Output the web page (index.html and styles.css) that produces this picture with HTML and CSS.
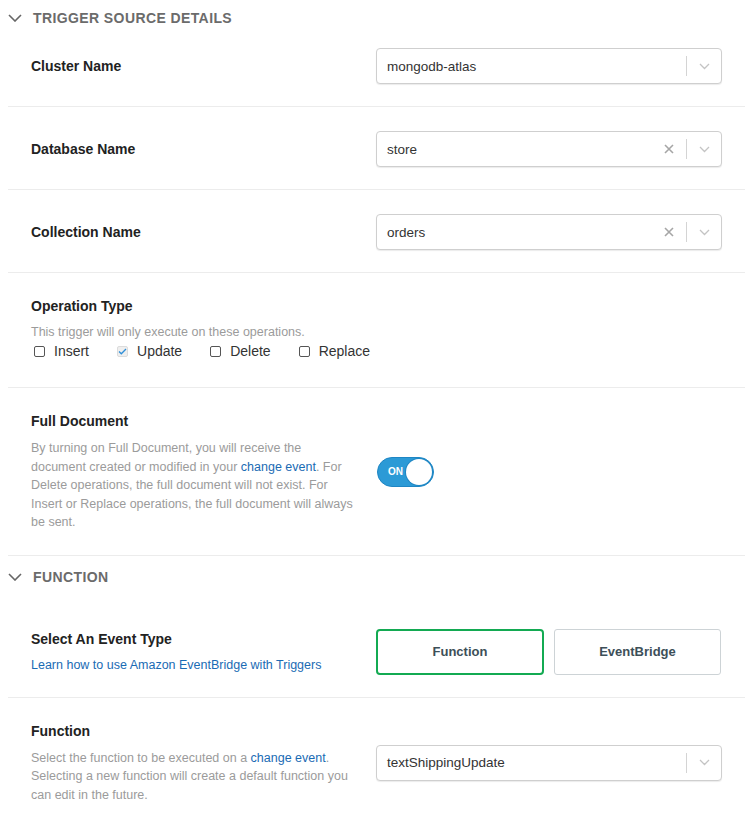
FILE: index.html
```html
<!DOCTYPE html>
<html>
<head>
<meta charset="utf-8">
<link rel="stylesheet" href="styles.css">
</head>
<body>
<div class="panel">
  <div class="section-header">
    <svg class="section-chevron" width="14" height="8" viewBox="0 0 14 8"><path d="M1 1l6 6 6-6" fill="none" stroke="#666" stroke-width="1.6"/></svg>
    <span>TRIGGER SOURCE DETAILS</span>
  </div>

  <div class="row row--first">
    <div class="label-col"><div class="label">Cluster Name</div></div>
    <div class="control-col">
      <div class="select">
        <span class="select-value">mongodb-atlas</span>
        <span class="select-sep"></span>
        <span class="select-caret"><svg width="11" height="7" viewBox="0 0 11 7"><path d="M1 1l4.5 4.5L10 1" fill="none" stroke="#c4c4c4" stroke-width="1.3"/></svg></span>
      </div>
    </div>
  </div>

  <div class="row">
    <div class="label-col"><div class="label">Database Name</div></div>
    <div class="control-col">
      <div class="select">
        <span class="select-value">store</span>
        <span class="select-clear"><svg width="10" height="10" viewBox="0 0 10 10"><path d="M1 1l8 8M9 1l-8 8" stroke="#a6a6a6" stroke-width="1.6"/></svg></span>
        <span class="select-sep"></span>
        <span class="select-caret"><svg width="11" height="7" viewBox="0 0 11 7"><path d="M1 1l4.5 4.5L10 1" fill="none" stroke="#c4c4c4" stroke-width="1.3"/></svg></span>
      </div>
    </div>
  </div>

  <div class="row">
    <div class="label-col"><div class="label">Collection Name</div></div>
    <div class="control-col">
      <div class="select">
        <span class="select-value">orders</span>
        <span class="select-clear"><svg width="10" height="10" viewBox="0 0 10 10"><path d="M1 1l8 8M9 1l-8 8" stroke="#a6a6a6" stroke-width="1.6"/></svg></span>
        <span class="select-sep"></span>
        <span class="select-caret"><svg width="11" height="7" viewBox="0 0 11 7"><path d="M1 1l4.5 4.5L10 1" fill="none" stroke="#c4c4c4" stroke-width="1.3"/></svg></span>
      </div>
    </div>
  </div>

  <div class="row row--block">
    <div class="label">Operation Type</div>
    <div class="help">This trigger will only execute on these operations.</div>
    <div class="checks">
      <label class="check"><span class="box"></span>Insert</label>
      <label class="check"><span class="box box--checked"><svg width="9" height="7" viewBox="0 0 9 7"><path d="M1 3.5l2.3 2.3L8 1" fill="none" stroke="#2f8fd8" stroke-width="1.3"/></svg></span>Update</label>
      <label class="check"><span class="box"></span>Delete</label>
      <label class="check"><span class="box"></span>Replace</label>
    </div>
  </div>

  <div class="row row--tall">
    <div class="label-col">
      <div class="label">Full Document</div>
      <p class="help help--para">By turning on Full Document, you will receive the<br>document created or modified in your <a class="link" href="#">change event</a>. For<br>Delete operations, the full document will not exist. For<br>Insert or Replace operations, the full document will always<br>be sent.</p>
    </div>
    <div class="control-col">
      <div class="toggle"><span class="toggle-text">ON</span><span class="toggle-knob"></span></div>
    </div>
  </div>

  <div class="section-header section-header--second">
    <svg class="section-chevron" width="14" height="8" viewBox="0 0 14 8"><path d="M1 1l6 6 6-6" fill="none" stroke="#666" stroke-width="1.6"/></svg>
    <span>FUNCTION</span>
  </div>

  <div class="row">
    <div class="label-col">
      <div class="label">Select An Event Type</div>
      <a class="link link--sub" href="#">Learn how to use Amazon EventBridge with Triggers</a>
    </div>
    <div class="control-col">
      <div class="choice-group">
        <button class="choice choice--active">Function</button>
        <button class="choice">EventBridge</button>
      </div>
    </div>
  </div>

  <div class="row row--last">
    <div class="label-col">
      <div class="label">Function</div>
      <p class="help help--para">Select the function to be executed on a <a class="link" href="#">change event</a>.<br>Selecting a new function will create a default function you<br>can edit in the future.</p>
    </div>
    <div class="control-col">
      <div class="select">
        <span class="select-value">textShippingUpdate</span>
        <span class="select-sep"></span>
        <span class="select-caret"><svg width="11" height="7" viewBox="0 0 11 7"><path d="M1 1l4.5 4.5L10 1" fill="none" stroke="#c4c4c4" stroke-width="1.3"/></svg></span>
      </div>
    </div>
  </div>
</div>
</body>
</html>
```

FILE: styles.css
```css
* { box-sizing: border-box; }

html, body {
  margin: 0;
  padding: 0;
  background: #fff;
}

body {
  font-family: "Liberation Sans", Arial, Helvetica, sans-serif;
  color: #222;
  width: 750px;
  overflow: hidden;
}

.panel {
  margin: 0 5px 0 8px;
}

.section-header {
  height: 36px;
  display: flex;
  align-items: center;
  gap: 11px;
  color: #6b6b6b;
  font-size: 14px;
  font-weight: 700;
  letter-spacing: 0.4px;
}

.section-header--second {
  margin-top: 3px;
  margin-bottom: 10px;
}

.section-chevron {
  flex: none;
}

.row {
  display: grid;
  grid-template-columns: 1fr 346px;
  align-items: center;
  padding: 24px 23px 22px 23px;
  border-bottom: 1px solid #ececec;
}

.row--first {
  padding-top: 12px;
}

.row--block {
  display: block;
  padding-bottom: 27px;
}

.row--tall {
  padding-bottom: 23px;
}

.row--last {
  border-bottom: none;
}

.label {
  font-size: 14px;
  font-weight: 700;
  line-height: 18px;
  color: #222;
}

.help {
  font-size: 12.5px;
  color: #9b9b9b;
  line-height: 18px;
  margin-top: 8px;
}

.help--para {
  margin: 9px 0 0 0;
  line-height: 18.5px;
  white-space: nowrap;
}

.link {
  color: #1a6bb4;
  text-decoration: none;
}

.link--sub {
  display: block;
  font-size: 12.5px;
  line-height: 18px;
  margin-top: 8px;
}

.control-col {
  display: flex;
  align-items: center;
}

.select {
  width: 346px;
  height: 36px;
  border: 1px solid #cfcfcf;
  border-radius: 4px;
  box-shadow: 0 1px 1px rgba(0, 0, 0, 0.08);
  display: flex;
  align-items: center;
  background: #fff;
}

.select-value {
  flex: 1;
  padding-left: 10px;
  font-size: 13.5px;
  color: #333;
}

.select-clear {
  width: 34px;
  display: flex;
  justify-content: center;
  align-items: center;
}

.select-sep {
  width: 1px;
  height: 20px;
  background: #d4d4d4;
}

.select-caret {
  width: 34px;
  display: flex;
  justify-content: center;
  align-items: center;
}

.checks {
  display: flex;
  align-items: center;
  gap: 28px;
  margin-top: 1px;
  padding-left: 3px;
  height: 18px;
}

.check {
  display: flex;
  align-items: center;
  gap: 9px;
  font-size: 14px;
  color: #333;
}

.box {
  width: 11px;
  height: 11px;
  border: 1.5px solid #555;
  border-radius: 2px;
  display: flex;
  align-items: center;
  justify-content: center;
}

.box--checked {
  border: 1px solid #dcdcdc;
  background: #efefef;
}

.toggle {
  margin-left: 1px;
  width: 57px;
  height: 30px;
  border-radius: 15px;
  background: #2c9ad6;
  border: 1px solid #1f86c4;
  display: flex;
  align-items: center;
  justify-content: space-between;
  padding: 0 1px 0 10px;
}

.toggle-text {
  color: #fff;
  font-size: 10px;
  font-weight: 700;
}

.toggle-knob {
  width: 26px;
  height: 26px;
  border-radius: 50%;
  background: #fff;
  box-shadow: 0 0 0 1px #1f86c4;
}

.choice-group {
  display: grid;
  grid-template-columns: 168px 167px;
  gap: 10px;
  width: 346px;
}

.choice {
  height: 46px;
  background: #fff;
  border: 1px solid #cdd3d6;
  border-radius: 3px;
  font-family: "Liberation Sans", Arial, sans-serif;
  font-size: 13px;
  font-weight: 700;
  color: #3d4f58;
  padding: 0;
}

.choice--active {
  border: 2px solid #13aa52;
  border-radius: 4px;
}
```
